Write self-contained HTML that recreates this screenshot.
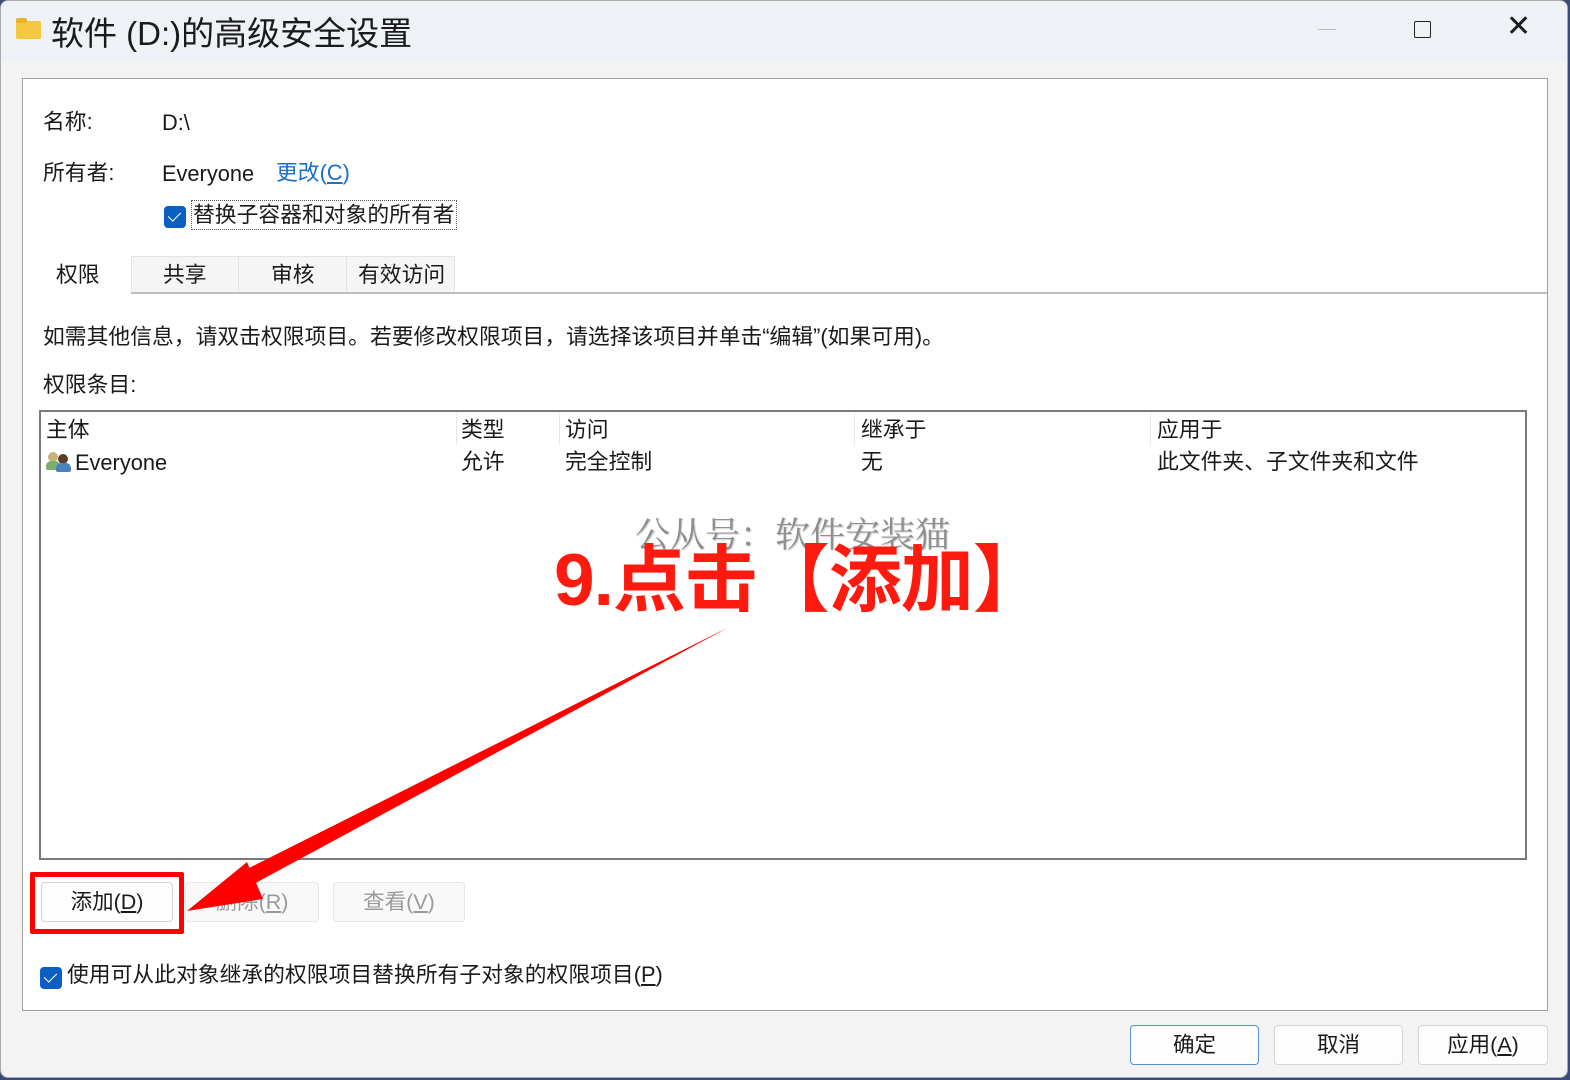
<!DOCTYPE html>
<html><head><meta charset="utf-8"><style>
*{margin:0;padding:0;box-sizing:border-box}
body{width:1570px;height:1080px;overflow:hidden;background:#3a4a7a;font-family:"Liberation Sans","Noto Sans CJK SC",sans-serif;color:#1a1a1a;position:relative}
.win{position:absolute;left:0;top:0;width:1568px;height:1078px;background:#f3f3f3;border:1px solid #aaa;border-radius:8px;overflow:hidden}
.a{position:absolute;white-space:nowrap}
.t{font-size:21.8px;line-height:28px}
.btn{position:absolute;background:#fdfdfd;border:1px solid #d4d4d4;border-radius:4px;font-size:21.5px;text-align:center}
.cb{position:absolute;width:22px;height:22px;background:#0a5fc2;border-radius:4px}
.cb:after{content:"";position:absolute;left:7px;top:3px;width:6px;height:11px;border:solid #fff;border-width:0 1.5px 1.5px 0;transform:rotate(45deg)}
</style></head><body>
<div class="win">
<div class="a" style="left:0;top:0;width:1568px;height:60px;background:#eef1f5"></div>
<div class="a" style="left:15px;top:20px;width:25px;height:18px;background:#f5c842;border-radius:2px"></div>
<div class="a" style="left:15px;top:17px;width:11px;height:5px;background:#e8b22a;border-radius:2px 2px 0 0"></div>
<div class="a" style="left:50px;top:6px;font-size:33px;color:#1a1a1a">软件 (D:)的高级安全设置</div>
<div class="a" style="left:1317px;top:28px;width:18px;height:1px;background:#bbb"></div>
<div class="a" style="left:1413px;top:20px;width:17px;height:17px;border:1.5px solid #222;border-radius:2px"></div>
<div class="a" style="left:1505px;top:8px;font-size:30px;font-weight:300">✕</div>

<div class="a" style="left:21px;top:77px;width:1526px;height:933px;background:#fff;border:1px solid #a0a0a0"></div>
<div class="a t" style="left:42px;top:107px">名称:</div>
<div class="a t" style="left:161px;top:108px">D:\</div>
<div class="a t" style="left:42px;top:158px">所有者:</div>
<div class="a t" style="left:161px;top:159px">Everyone</div>
<div class="a t" style="left:275px;top:158px;color:#1a6fc9">更改(<u>C</u>)</div>
<div class="cb" style="left:163px;top:205px"></div>
<div class="a t" style="left:190px;top:199px;border:1px dotted #555;padding:0 1px">替换子容器和对象的所有者</div>

<div class="a" style="left:23px;top:291px;width:1523px;height:2px;background:#bdbdbd"></div>
<div class="a" style="left:23px;top:255px;width:107px;height:38px;background:#fff"></div>
<div class="a t" style="left:55px;top:260px">权限</div>
<div class="a" style="left:130px;top:255px;width:324px;height:36px;background:#f5f5f5;border:1px solid #e3e3e3;border-bottom:none"></div>
<div class="a" style="left:237px;top:256px;width:1px;height:35px;background:#e3e3e3"></div>
<div class="a" style="left:345px;top:256px;width:1px;height:35px;background:#e3e3e3"></div>
<div class="a t" style="left:162px;top:260px">共享</div>
<div class="a t" style="left:270px;top:260px">审核</div>
<div class="a t" style="left:357px;top:260px">有效访问</div>

<div class="a t" style="left:42px;top:322px">如需其他信息，请双击权限项目。若要修改权限项目，请选择该项目并单击“编辑”(如果可用)。</div>
<div class="a t" style="left:42px;top:370px">权限条目:</div>

<div class="a" style="left:38px;top:409px;width:1488px;height:450px;border:2px solid #7a7a7a;background:#fff"></div>
<div class="a t" style="left:45px;top:415px">主体</div>
<div class="a t" style="left:460px;top:415px">类型</div>
<div class="a t" style="left:564px;top:415px">访问</div>
<div class="a t" style="left:860px;top:415px">继承于</div>
<div class="a t" style="left:1156px;top:415px">应用于</div>
<div class="a" style="left:455px;top:412px;width:1px;height:32px;background:#e5e5e5"></div>
<div class="a" style="left:558px;top:412px;width:1px;height:32px;background:#e5e5e5"></div>
<div class="a" style="left:853px;top:412px;width:1px;height:32px;background:#e5e5e5"></div>
<div class="a" style="left:1149px;top:412px;width:1px;height:32px;background:#e5e5e5"></div>
<div class="a" style="left:47px;top:451px;width:10px;height:10px;border-radius:50%;background:#c9b27a"></div>
<div class="a" style="left:45px;top:460px;width:14px;height:9px;border-radius:5px 5px 2px 2px;background:#7ab06a"></div>
<div class="a" style="left:57px;top:453px;width:10px;height:10px;border-radius:50%;background:#5a3e2a"></div>
<div class="a" style="left:55px;top:462px;width:15px;height:9px;border-radius:5px 5px 2px 2px;background:#4a7fc0"></div>
<div class="a t" style="left:74px;top:448px">Everyone</div>
<div class="a t" style="left:460px;top:447px">允许</div>
<div class="a t" style="left:564px;top:447px">完全控制</div>
<div class="a t" style="left:860px;top:447px">无</div>
<div class="a t" style="left:1156px;top:447px">此文件夹、子文件夹和文件</div>

<div class="a" style="left:634px;top:507px;font-size:35px;color:#8e8e8e;text-shadow:1px 1px 1px #ccc;font-family:'Noto Serif CJK SC',serif">公从号：软件安装猫</div>
<div class="a" style="left:553px;top:520px;font-size:73px;font-weight:bold;color:#ff1a0f;letter-spacing:-1px">9.点击【添加】</div>

<div class="btn" style="left:40px;top:881px;width:132px;height:40px;line-height:38px">添加(<u>D</u>)</div>
<div class="btn" style="left:184px;top:881px;width:134px;height:40px;line-height:38px;color:#9a9a9a;background:#f9f9f9;border-color:#e6e6e6">删除(<u>R</u>)</div>
<div class="btn" style="left:332px;top:881px;width:132px;height:40px;line-height:38px;color:#9a9a9a;background:#f9f9f9;border-color:#e6e6e6">查看(<u>V</u>)</div>
<div class="a" style="left:29px;top:871px;width:154px;height:62px;border:5px solid #f00;border-radius:2px"></div>

<svg class="a" style="left:0;top:0" width="1568" height="1078">
<polygon points="726,627 230,876 238,891" fill="#f00"/>
<polygon points="186,910 246,861 262,898" fill="#f00"/>
<polygon points="726,627 235,878 240,888" fill="#f00"/>
</svg>

<div class="cb" style="left:39px;top:966px"></div>
<div class="a t" style="left:66px;top:960px">使用可从此对象继承的权限项目替换所有子对象的权限项目(<u>P</u>)</div>

<div class="btn" style="left:1129px;top:1024px;width:129px;height:40px;line-height:38px;border-color:#5a8fcf">确定</div>
<div class="btn" style="left:1273px;top:1024px;width:129px;height:40px;line-height:38px">取消</div>
<div class="btn" style="left:1417px;top:1024px;width:130px;height:40px;line-height:38px">应用(<u>A</u>)</div>
</div>
</body></html>
